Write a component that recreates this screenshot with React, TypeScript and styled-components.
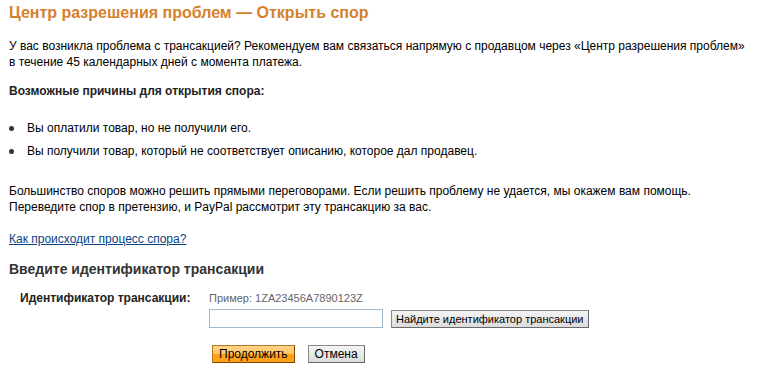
import styled, { createGlobalStyle } from 'styled-components'

const GlobalStyle = createGlobalStyle`
  body {
    margin: 0;
    background: #fff;
    font-family: Arial, "Liberation Sans", sans-serif;
    color: #000;
  }
`

const Page = styled.div`
  padding: 3px 9px 0 9px;
  font-size: 12px;
`

const Title = styled.h1`
  margin: 0;
  font-size: 16px;
  line-height: 20px;
  font-weight: bold;
  color: #d5812d;
`

const Text = styled.p<{ $mt: number }>`
  margin: ${(p) => p.$mt}px 0 0 0;
  line-height: 16px;
`

const Strong = styled(Text)`
  font-weight: bold;
  color: #222;
`

const Bullets = styled.ul`
  list-style: none;
  margin: 21px 0 0 0;
  padding: 0;
  display: flex;
  flex-direction: column;
  gap: 7px;
`

const Bullet = styled.li`
  display: flex;
  align-items: center;
  gap: 13px;
  line-height: 16px;
  &::before {
    content: '';
    width: 5px;
    height: 5px;
    border-radius: 50%;
    background: #333;
  }
`

const HelpLink = styled.a`
  display: block;
  margin-top: 16px;
  line-height: 16px;
  color: #084482;
  text-decoration: underline;
`

const Heading = styled.h2`
  margin: 13px 0 0 0;
  font-size: 14px;
  line-height: 18px;
  font-weight: bold;
  color: #333;
`

const FormGrid = styled.div`
  display: grid;
  grid-template-columns: 178px auto;
  column-gap: 11px;
  margin-top: 12px;
  padding-left: 11px;
`

const Label = styled.div`
  font-weight: bold;
  color: #222;
  line-height: 16px;
`

const Field = styled.div`
  display: flex;
  flex-direction: column;
`

const Hint = styled.div`
  font-size: 11px;
  color: #666;
  line-height: 16px;
`

const InputRow = styled.div`
  display: flex;
  align-items: center;
  gap: 8px;
  margin-top: 3px;
`

const Input = styled.input`
  box-sizing: border-box;
  width: 174px;
  height: 19px;
  border: 1px solid #a5b9cc;
  margin: 0;
`

const Button = styled.button<{ $primary?: boolean; $small?: boolean }>`
  box-sizing: border-box;
  height: 18px;
  margin: 0;
  padding: 0 ${(p) => (p.$small ? '4px' : '6px')};
  font-family: Arial, "Liberation Sans", sans-serif;
  font-size: ${(p) => (p.$small ? '11px' : '12px')};
  line-height: 16px;
  color: #000;
  border: 1px solid ${(p) => (p.$primary ? '#b0782a' : '#8a8a8a')};
  border-right-color: ${(p) => (p.$primary ? '#7a4a00' : '#6a6a6a')};
  border-bottom-color: ${(p) => (p.$primary ? '#7a4a00' : '#6a6a6a')};
  background: ${(p) =>
    p.$primary
      ? 'linear-gradient(#ffd488 0%, #ffc460 50%, #ffa21a 51%, #ff9f1a 100%)'
      : 'linear-gradient(#f4f4f4 0%, #e8e8e8 50%, #dcdcdc 100%)'};
  cursor: pointer;
`

const Actions = styled.div`
  display: flex;
  gap: 13px;
  margin-top: 17px;
  padding-left: 3px;
`

export default function App() {
  return (
    <Page>
      <GlobalStyle />
      <Title>Центр разрешения проблем — Открыть спор</Title>
      <Text $mt={15}>
        У вас возникла проблема с трансакцией? Рекомендуем вам связаться напрямую с продавцом через «Центр
        разрешения проблем»
        <br />в течение 45 календарных дней с момента платежа.
      </Text>
      <Strong $mt={13}>Возможные причины для открытия спора:</Strong>
      <Bullets>
        <Bullet>Вы оплатили товар, но не получили его.</Bullet>
        <Bullet>Вы получили товар, который не соответствует описанию, которое дал продавец.</Bullet>
      </Bullets>
      <Text $mt={24}>
        Большинство споров можно решить прямыми переговорами. Если решить проблему не удается, мы окажем вам
        помощь.
        <br />
        Переведите спор в претензию, и PayPal рассмотрит эту трансакцию за вас.
      </Text>
      <HelpLink href="#">Как происходит процесс спора?</HelpLink>
      <Heading>Введите идентификатор трансакции</Heading>
      <FormGrid>
        <Label>Идентификатор трансакции:</Label>
        <Field>
          <Hint>Пример: 1ZA23456A7890123Z</Hint>
          <InputRow>
            <Input type="text" />
            <Button $small>Найдите идентификатор трансакции</Button>
          </InputRow>
          <Actions>
            <Button $primary>Продолжить</Button>
            <Button>Отмена</Button>
          </Actions>
        </Field>
      </FormGrid>
    </Page>
  )
}
